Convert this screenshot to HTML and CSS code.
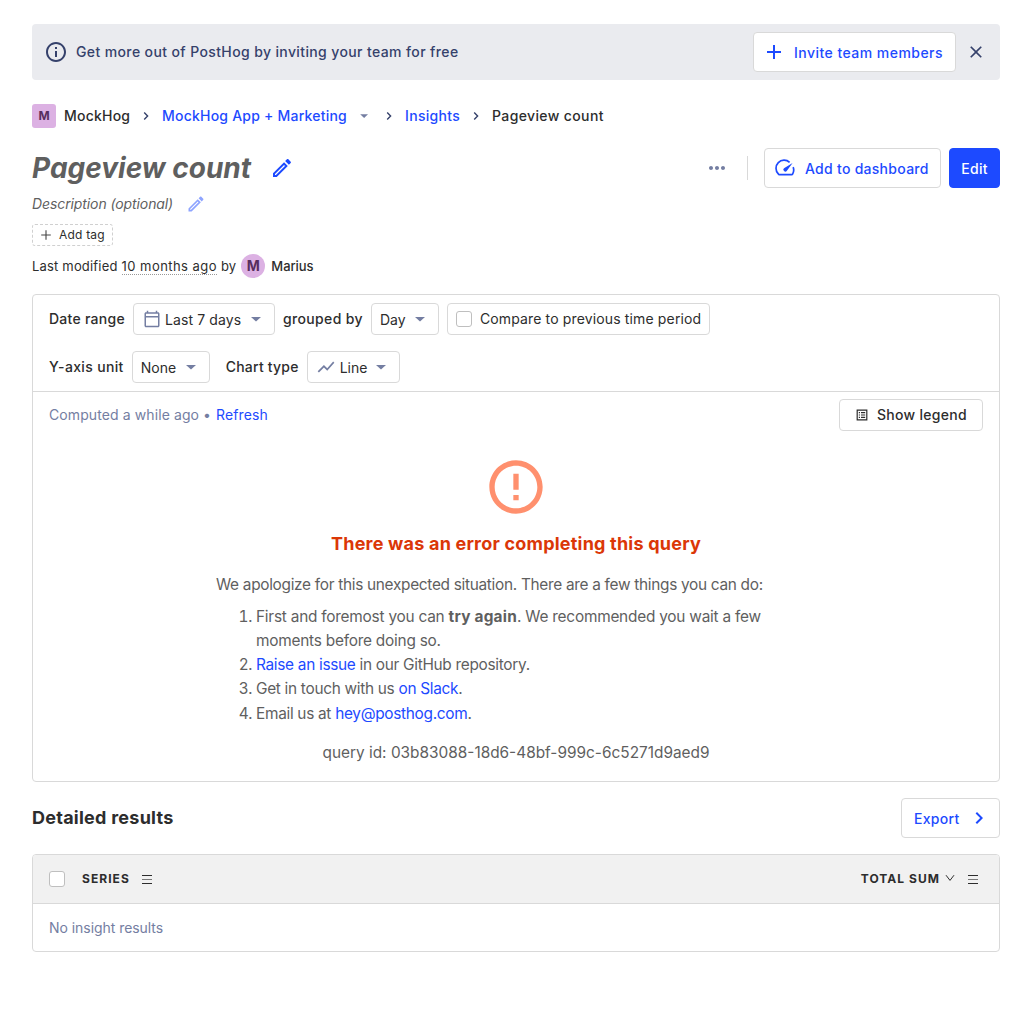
FILE: index.html
```html
<!DOCTYPE html>
<html lang="en">
<head>
<meta charset="utf-8">
<title>Pageview count • PostHog</title>
<link rel="stylesheet" href="styles.css">
</head>
<body>
<main class="page">
  <section class="banner">
    <svg class="icon i24" viewBox="0 0 24 24"><path d="M11 7h2v2h-2zm0 4h2v6h-2zm1-9C6.480 2 2 6.480 2 12s4.480 10 10 10 10-4.480 10-10S17.520 2 12 2zm0 18c-4.410 0-8-3.590-8-8s3.590-8 8-8 8 3.590 8 8-3.590 8-8 8z"/></svg>
    <span class="banner-text">Get more out of PostHog by inviting your team for free</span>
    <button class="btn btn-invite"><svg class="icon i24" viewBox="0 0 24 24"><path d="M19 13h-6v6h-2v-6H5v-2h6V5h2v6h6v2z"/></svg><span>Invite team members</span></button>
    <button class="close"><svg class="icon i20" viewBox="0 0 24 24"><path d="M19 6.410 17.590 5 12 10.590 6.410 5 5 6.410 10.590 12 5 17.590 6.410 19 12 13.410 17.590 19 19 17.590 13.410 12z"/></svg></button>
  </section>

  <nav class="crumbs">
    <span class="avatar square">M</span>
    <span class="c-org">MockHog</span>
    <svg class="icon chev" viewBox="0 0 16 16"><path d="M6.200 4.600 9.600 8l-3.400 3.400"/></svg>
    <a class="c-project">MockHog App + Marketing</a>
    <svg class="icon caret" viewBox="0 0 16 16"><path d="m4.200 6.300 3.900 3.700L12 6.300z"/></svg>
    <svg class="icon chev" viewBox="0 0 16 16"><path d="M6.200 4.600 9.600 8l-3.400 3.400"/></svg>
    <a class="c-insights">Insights</a>
    <svg class="icon chev" viewBox="0 0 16 16"><path d="M6.200 4.600 9.600 8l-3.400 3.400"/></svg>
    <span class="c-page">Pageview count</span>
  </nav>

  <header class="title-row">
    <h1>Pageview count</h1>
    <svg class="icon i24 edit" viewBox="0 0 24 24"><path d="m14.060 9.020.92.920L5.920 19H5v-.92l9.060-9.060M17.660 3c-.25 0-.51.100-.700.290l-1.830 1.830 3.750 3.750 1.830-1.830c.39-.390.390-1.020 0-1.410l-2.340-2.340c-.200-.200-.450-.290-.710-.290zm-3.600 3.190L3 17.250V21h3.750L17.810 9.940l-3.750-3.750z"/></svg>
    <div class="actions">
      <svg class="icon i24 more" viewBox="0 0 24 24"><path d="M6 10c-1.100 0-2 .9-2 2s.9 2 2 2 2-.9 2-2-.9-2-2-2zm12 0c-1.100 0-2 .9-2 2s.9 2 2 2 2-.9 2-2-.9-2-2-2zm-6 0c-1.100 0-2 .9-2 2s.9 2 2 2 2-.9 2-2-.9-2-2-2z"/></svg>
      <span class="divider"></span>
      <button class="btn btn-dash"><svg class="icon i20" viewBox="0 0 20 20"><path class="stroke" d="M14.600 4.300A8.100 8.100 0 0 0 3.300 15.900q.35.700 1.100.700h12.200q.75 0 1.100-.700a8.100 8.100 0 0 0 .45-6.800"/><path d="M17.600 4.900 11.900 12.700a1.850 1.850 0 1 1-2.500-2.600z"/></svg><span>Add to dashboard</span></button>
      <button class="btn btn-primary">Edit</button>
    </div>
  </header>

  <div class="description">
    <span>Description (optional)</span>
    <svg class="icon i20" viewBox="0 0 24 24"><path d="m14.060 9.020.92.920L5.920 19H5v-.92l9.060-9.060M17.660 3c-.25 0-.51.100-.700.290l-1.830 1.830 3.750 3.750 1.830-1.830c.39-.390.390-1.020 0-1.410l-2.340-2.340c-.200-.200-.450-.290-.710-.290zm-3.600 3.190L3 17.250V21h3.750L17.810 9.940l-3.750-3.750z"/></svg>
  </div>
  <button class="add-tag"><svg viewBox="0 0 12 12"><path d="M6 1.200v9.600M1.200 6h9.600"/></svg><span>Add tag</span></button>
  <div class="modified">
    <span>Last modified</span><span class="ago">10 months ago</span><span class="by">by</span>
    <span class="avatar round">M</span><span class="name">Marius</span>
  </div>

  <section class="card">
    <div class="filters">
      <div class="filter-row">
        <span class="label l-date">Date range</span>
        <button class="select s-date"><svg class="icon calendar" viewBox="0 0 24 24"><path d="M20 3h-1V1h-2v2H7V1H5v2H4c-1.100 0-2 .9-2 2v16c0 1.100.900 2 2 2h16c1.100 0 2-.9 2-2V5c0-1.100-.900-2-2-2zm0 18H4V10h16v11zm0-13H4V5h16v3z"/></svg><span>Last 7 days</span><svg class="icon i20 drop" viewBox="0 0 20 20"><path d="m5 8 5 4.500L15 8z"/></svg></button>
        <span class="label">grouped by</span>
        <button class="select s-day"><span>Day</span><svg class="icon i20 drop" viewBox="0 0 20 20"><path d="m5 8 5 4.500L15 8z"/></svg></button>
        <label class="select s-compare"><span class="check"></span><span>Compare to previous time period</span></label>
      </div>
      <div class="filter-row">
        <span class="label">Y-axis unit</span>
        <button class="select s-unit"><span>None</span><svg class="icon i20 drop" viewBox="0 0 20 20"><path d="m5 8 5 4.500L15 8z"/></svg></button>
        <span class="label l-chart">Chart type</span>
        <button class="select s-chart"><svg class="icon i20" viewBox="0 0 24 24"><path d="m3.500 18.490 6-6.010 4 4L22 6.920l-1.410-1.410-7.090 7.970-4-4L2 16.990z"/></svg><span>Line</span><svg class="icon i20 drop" viewBox="0 0 20 20"><path d="m5 8 5 4.500L15 8z"/></svg></button>
      </div>
    </div>
    <div class="status">
      <span class="computed">Computed a while ago</span><span class="dot">•</span><a>Refresh</a>
      <button class="select legend"><svg viewBox="0 0 12 12"><path class="frame" d="M1.200 1.200h9.600v9.600H1.200z"/><path d="M2.800 3h1.200v1.200H2.800zM2.800 5.400h1.200v1.200H2.800zM2.800 7.800h1.200v1.200H2.800zM5 3h4.200v1.200H5zM5 5.400h4.200v1.200H5zM5 7.800h4.200v1.200H5z"/></svg><span>Show legend</span></button>
    </div>
    <div class="error">
      <svg class="icon error-icon" viewBox="0 0 24 24"><path d="M11 15h2v2h-2v-2zm0-8h2v6h-2V7zm.990-5C6.470 2 2 6.480 2 12s4.470 10 9.990 10C17.520 22 22 17.520 22 12S17.520 2 11.990 2zM12 20c-4.420 0-8-3.580-8-8s3.580-8 8-8 8 3.580 8 8-3.580 8-8 8z"/></svg>
      <h2>There was an error completing this query</h2>
      <div class="help">
        <p>We apologize for this unexpected situation. There are a few things you can do:</p>
        <ol>
          <li class="first">First and foremost you can <b>try again</b>. We recommended you wait a few moments before doing so.</li>
          <li><a>Raise an issue</a> in our GitHub repository.</li>
          <li>Get in touch with us <a>on Slack</a>.</li>
          <li>Email us at <a>hey@posthog.com</a>.</li>
        </ol>
      </div>
      <div class="query">query id: 03b83088-18d6-48bf-999c-6c5271d9aed9</div>
    </div>
  </section>

  <div class="details-head">
    <h2>Detailed results</h2>
    <button class="btn btn-export"><span>Export</span><svg class="icon" viewBox="0 0 24 24"><path d="M10 6 8.590 7.410 13.170 12l-4.580 4.590L10 18l6-6z"/></svg></button>
  </div>
  <section class="table">
    <div class="thead">
      <span class="check"></span><span class="th">Series</span>
      <svg class="menu" viewBox="0 0 10 10"><path d="M0 1.500h10M0 9.500h10"/><path class="mid" d="M0 5.500h10"/></svg>
      <span class="th th-total">Total sum</span>
      <svg class="down" viewBox="0 0 10 8"><path d="m1 1.200 4 5.200 4-5.200"/></svg>
      <svg class="menu menu-end" viewBox="0 0 10 10"><path d="M0 1.500h10M0 9.500h10"/><path class="mid" d="M0 5.500h10"/></svg>
    </div>
    <div class="empty">No insight results</div>
  </section>
</main>
</body>
</html>
```
FILE: styles.css
```css
* { box-sizing: border-box; }
body {
  margin: 0;
  background: #fff;
  color: #2d2d2d;
  font: 14px/20px Inter, "Liberation Sans", sans-serif;
}
h1, h2, p, ol { margin: 0; }
button { font: inherit; color: inherit; padding: 0; margin: 0; background: none; border: 0; }
a { color: #1d4aff; }
svg { flex: none; display: block; }
span { white-space: nowrap; }
.icon { fill: currentColor; }
.i24 { width: 24px; height: 24px; }
.i20 { width: 20px; height: 20px; }
.page { padding: 24px 32px 0; }

.banner {
  display: flex;
  align-items: center;
  height: 56px;
  padding: 0 14px 0 12px;
  background: #eaebef;
  border-radius: 4px;
  color: #35416b;
  font-weight: 500;
}
.banner-text { margin-left: 8px; letter-spacing: .38px; }
.btn {
  display: flex;
  align-items: center;
  height: 40px;
  border: 1px solid #d9d9d9;
  border-radius: 4px;
  background: #fff;
  color: #1d4aff;
  font-weight: 500;
  letter-spacing: .28px;
}
.btn > span { position: relative; top: 1px; }
.btn-invite { margin-left: auto; width: 203px; padding-left: 8px; letter-spacing: .46px; }
.btn-invite span { margin-left: 8px; }
.close { margin-left: 10px; }

.crumbs { display: flex; align-items: center; height: 24px; margin-top: 24px; font-weight: 500; }
.avatar {
  display: flex;
  align-items: center;
  justify-content: center;
  width: 24px;
  height: 24px;
  background: #dcb1e3;
  color: #572e5e;
  font-weight: 700;
  letter-spacing: 0;
}
.square { border-radius: 3px; font-size: 12px; }
.round { border-radius: 50%; font-size: 14px; }
.c-org { margin-left: 8px; width: 66px; letter-spacing: .22px; }
.c-project { width: 185px; white-space: nowrap; letter-spacing: .22px; }
.c-insights { width: 55px; letter-spacing: .32px; }
.c-page { letter-spacing: .38px; }
.chev { width: 16px; height: 16px; margin: 0 8px; fill: none; stroke: #35416b; stroke-width: 1.4; }
.caret { width: 16px; height: 16px; margin: 0 1px 0 9px; color: #747ea2; }

.title-row { display: flex; align-items: center; height: 40px; margin-top: 20px; }
h1 { color: #5f5f5f; font-size: 28px; line-height: 40px; font-style: italic; font-weight: 700; width: 219px; white-space: nowrap; }
.edit { margin-left: 19px; color: #1d4aff; }
.actions { display: flex; align-items: center; margin-left: auto; }
.more { color: #747ea2; }
.divider { width: 1px; height: 24px; margin: 0 16px 0 18px; background: #d9d9d9; }
.btn-dash { width: 177px; padding-left: 10px; }
.btn-dash span { margin-left: 10px; }
.stroke { fill: none; stroke: currentColor; stroke-width: 1.7; }
.btn-primary { width: 51px; margin-left: 8px; justify-content: center; background: #1d4aff; border-color: #1d4aff; color: #fff; padding-top: 2px; }

.description { display: flex; align-items: center; height: 20px; margin-top: 6px; color: #5f5f5f; font-style: italic; letter-spacing: -.1px; }
.description span { width: 141px; }
.description svg { margin-left: 13px; color: #8ea4ff; }
.add-tag {
  display: flex;
  align-items: center;
  width: 81px;
  height: 22px;
  margin-top: 10px;
  padding-left: 7px;
  border: 1px dashed #d0d0d0;
  border-radius: 3px;
  font-size: 12px;
  letter-spacing: .2px;
}
.add-tag svg { width: 12px; height: 12px; fill: none; stroke: #444; stroke-width: 1.1; }
.add-tag span { margin-left: 7px; }
.modified { display: flex; align-items: center; height: 24px; margin-top: 8px; font-size: 13px; letter-spacing: .18px; }
.ago { margin: 1px 4px 0; line-height: 16px; border-bottom: 1px dotted #999; letter-spacing: .45px; }
.by { margin-right: 5px; }
.name { margin-left: 6px; font-weight: 500; letter-spacing: -.05px; }

.card { height: 488px; margin-top: 16px; border: 1px solid #d9d9d9; border-radius: 4px; }
.filters { height: 97px; padding: 8px 16px; border-bottom: 1px solid #d9d9d9; }
.filter-row { display: flex; align-items: center; height: 32px; margin-bottom: 16px; }
.label { font-weight: 500; margin-right: 8px; letter-spacing: .35px; }
.l-date { width: 76px; letter-spacing: .27px; }
.l-chart { margin-left: 16px; letter-spacing: .22px; }
.select { display: flex; align-items: center; height: 32px; padding-left: 8px; border: 1px solid #d9d9d9; border-radius: 4px; }
.select .icon { color: #747ea2; }
.select .calendar { width: 18px; height: 18px; margin: 0 1px; }
.select .drop { margin-left: auto; }
.select .icon + span { margin-left: 4px; }
.select .calendar + span { margin-left: 3px; letter-spacing: .1px; }
.s-date { width: 142px; margin-right: 8px; padding-right: 8px; }
.s-day { width: 68px; margin-right: 8px; padding-right: 8px; }
.s-unit { width: 78px; padding-right: 8px; }
.s-chart { width: 93px; padding-right: 8px; }
button.select > span { position: relative; top: 1px; }
.s-compare { width: 263px; letter-spacing: .14px; }
.check { width: 16px; height: 16px; flex: none; border: 1px solid #bfbfbf; border-radius: 3px; background: #fff; }
.check + span { margin-left: 8px; }

.status { display: flex; align-items: center; height: 46px; padding: 0 16px; color: #747ea2; letter-spacing: .1px; }
.dot { margin: 0 5px 0 4px; }
.legend { width: 144px; margin-left: auto; padding-left: 16px; color: #2d2d2d; font-weight: 500; letter-spacing: .28px; }
.legend svg { width: 12px; height: 12px; fill: currentColor; }
.legend .frame { fill: none; stroke: currentColor; stroke-width: 1.2; }
button.legend > span { margin-left: 9px; top: 0; }

.error { display: flex; flex-direction: column; align-items: center; padding-top: 17px; color: #5f5f5f; font-size: 15.4px; line-height: 24.200px; }
.error-icon { width: 64px; height: 64px; color: #ff906e; }
.error h2 { margin-top: 11px; color: #db3707; font-size: 18px; line-height: 28px; font-weight: 700; letter-spacing: .21px; }
.help { width: 600px; margin-top: 14.500px; letter-spacing: -.3px; }
.help ol { margin-top: 8px; padding-left: 40px; padding-right: 40px; }
.help .first { letter-spacing: -.23px; }
.help b { letter-spacing: .22px; }
.query { margin-top: 15px; white-space: nowrap; }

.details-head { display: flex; align-items: center; justify-content: space-between; height: 40px; margin-top: 16px; }
.details-head h2 { font-size: 18px; font-weight: 700; letter-spacing: .25px; }
.btn-export { width: 99px; padding-left: 12px; }
.btn-export svg { width: 24px; height: 24px; margin-left: 8px; }
.table { margin-top: 16px; height: 98px; border: 1px solid #d9d9d9; border-radius: 4px; overflow: hidden; }
.thead { display: flex; align-items: center; height: 49px; padding: 0 21px 0 16px; background: #f1f1f1; border-bottom: 1px solid #d9d9d9; }
.th { font-size: 12px; font-weight: 700; letter-spacing: 1.05px; text-transform: uppercase; }
.thead .check + .th { margin-left: 17px; }
.menu { width: 10px; height: 10px; margin-left: 12px; margin-bottom: 1px; fill: none; stroke: #2d2d2d; }
.mid { stroke: #777; }
.thead .th-total { margin-left: auto; }
.down { width: 10px; height: 8px; margin-left: 5px; margin-bottom: 2px; fill: none; stroke: #2d2d2d; }
.menu-end { margin-left: 13px; }
.empty { padding: 14px 16px; color: #747ea2; letter-spacing: -.05px; }
```
